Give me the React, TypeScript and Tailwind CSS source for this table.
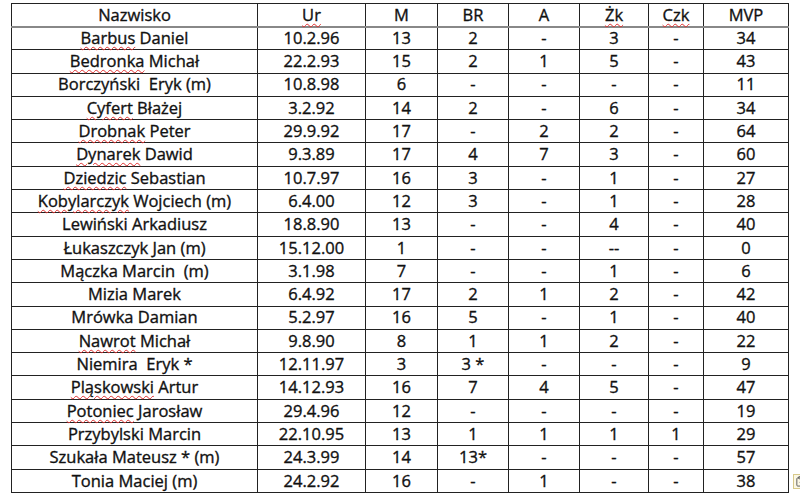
import { ClipboardPaste } from "lucide-react";

type Row = [string, string, string, string, string, string, string, string];

const rows: Row[] = [
  ["Barbus Daniel", "10.2.96", "13", "2", "-", "3", "-", "34"],
  ["Bedronka Michał", "22.2.93", "15", "2", "1", "5", "-", "43"],
  ["Borczyński  Eryk (m)", "10.8.98", "6", "-", "-", "-", "-", "11"],
  ["Cyfert Błażej", "3.2.92", "14", "2", "-", "6", "-", "34"],
  ["Drobnak Peter", "29.9.92", "17", "-", "2", "2", "-", "64"],
  ["Dynarek Dawid", "9.3.89", "17", "4", "7", "3", "-", "60"],
  ["Dziedzic Sebastian", "10.7.97", "16", "3", "-", "1", "-", "27"],
  ["Kobylarczyk Wojciech (m)", "6.4.00", "12", "3", "-", "1", "-", "28"],
  ["Lewiński Arkadiusz", "18.8.90", "13", "-", "-", "4", "-", "40"],
  ["Łukaszczyk Jan (m)", "15.12.00", "1", "-", "-", "--", "-", "0"],
  ["Mączka Marcin  (m)", "3.1.98", "7", "-", "-", "1", "-", "6"],
  ["Mizia Marek", "6.4.92", "17", "2", "1", "2", "-", "42"],
  ["Mrówka Damian", "5.2.97", "16", "5", "-", "1", "-", "40"],
  ["Nawrot Michał", "9.8.90", "8", "1", "1", "2", "-", "22"],
  ["Niemira  Eryk *", "12.11.97", "3", "3 *", "-", "-", "-", "9"],
  ["Pląskowski Artur", "14.12.93", "16", "7", "4", "5", "-", "47"],
  ["Potoniec Jarosław", "29.4.96", "12", "-", "-", "-", "-", "19"],
  ["Przybylski Marcin", "22.10.95", "13", "1", "1", "1", "1", "29"],
  ["Szukała Mateusz * (m)", "24.3.99", "14", "13*", "-", "-", "-", "57"],
  ["Tonia Maciej (m)", "24.2.92", "16", "-", "1", "-", "-", "38"],
];

// words flagged by the spell checker
const flagged = new Set([
  "Barbus",
  "Bedronka",
  "Cyfert",
  "Drobnak",
  "Dynarek",
  "Dziedzic",
  "Kobylarczyk",
  "Nawrot",
  "Pląskowski",
  "Potoniec",
  "Ur",
  "Żk",
  "Czk",
]);

function Word({ text }: { text: string }) {
  const parts = text.split(/(\s+)/);
  return (
    <>
      {parts.map((p, i) =>
        flagged.has(p) ? (
          <span
            key={i}
            className="underline decoration-wavy decoration-[#e03030] decoration-1 underline-offset-[2px]"
          >
            {p}
          </span>
        ) : (
          <span key={i}>{p}</span>
        )
      )}
    </>
  );
}

const widths = ["w-[246px]", "w-[108px]", "w-[72px]", "w-[71px]", "w-[71px]", "w-[69px]", "w-[55px]", "w-[85px]"];
const header = ["Nazwisko", "Ur", "M", "BR", "A", "Żk", "Czk", "MVP"];

export default function App() {
  return (
    <div
      className="relative w-[800px] h-[499px] bg-white text-[#111] overflow-hidden"
      style={{ fontFamily: "'Open Sans', Lato, sans-serif" }}
    >
      <table className="ml-[11px] mt-[3px] table-fixed border-collapse text-[16.5px] leading-none [-webkit-text-stroke:0.35px_#111]">
        <colgroup>
          {widths.map((w, i) => (
            <col key={i} className={w} />
          ))}
        </colgroup>
        <thead>
          <tr className="h-[23px]">
            {header.map((h, i) => (
              <th
                key={i}
                className="border border-[#222] border-b-[#888] border-b-2 p-0 text-center font-normal whitespace-pre"
              >
                <Word text={h} />
              </th>
            ))}
          </tr>
        </thead>
        <tbody>
          {rows.map((r, ri) => (
            <tr key={ri} className="h-[23.3px]">
              {r.map((c, ci) => (
                <td
                  key={ci}
                  className="border border-[#222] p-0 text-center whitespace-pre"
                >
                  <Word text={c} />
                </td>
              ))}
            </tr>
          ))}
        </tbody>
      </table>
      <div className="absolute left-[793px] top-[474px] w-[14px] h-[15px] border border-[#d8c98a] bg-[#fbf7e4] flex items-center justify-center">
        <ClipboardPaste size={11} strokeWidth={2} className="text-[#555]" />
      </div>
    </div>
  );
}
